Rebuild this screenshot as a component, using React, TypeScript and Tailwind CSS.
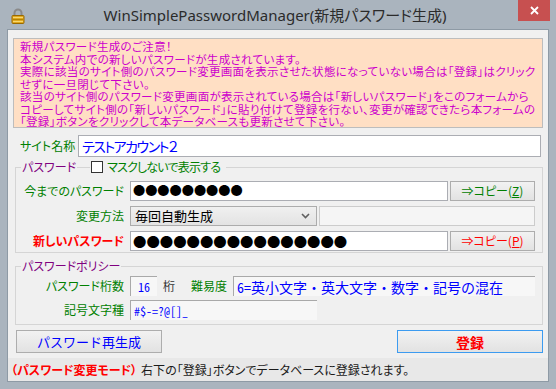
import React from "react";

const Lock = () => (
  <svg width="14" height="16" viewBox="0 0 14 16">
    <path d="M3.5 8 V5 a3.5 3.5 0 0 1 7 0 V8" fill="none" stroke="#8a8a8a" strokeWidth="2" />
    <rect x="1" y="7.5" width="12" height="8" rx="1" fill="#e0a820" stroke="#9a6a00" strokeWidth="1" />
    <line x1="2" y1="9.5" x2="12" y2="9.5" stroke="#f6d870" />
    <line x1="2" y1="11.5" x2="12" y2="11.5" stroke="#b58300" />
    <line x1="2" y1="13.5" x2="12" y2="13.5" stroke="#f6d870" />
  </svg>
);

const Chevron = () => (
  <svg width="9" height="6" viewBox="0 0 9 6">
    <path d="M1 1 L4.5 4.5 L8 1" fill="none" stroke="#606060" strokeWidth="1.6" />
  </svg>
);

export default function App() {
  return (
    <div className="w-[556px] h-[389px] bg-[#aab4be] flex flex-col font-['Noto_Sans_CJK_JP',sans-serif] [font-feature-settings:'palt'] text-[12px] leading-[14px] overflow-hidden">
      {/* Title bar */}
      <div className="h-[29px] flex items-start shrink-0">
        <div className="w-[32px] pl-[11px] pt-[8px]">
          <Lock />
        </div>
        <div className="flex-1 text-center pt-[5px] text-[15px] leading-[20px] text-[#2b2b2b] font-['Noto_Sans','Noto_Sans_CJK_JP',sans-serif] whitespace-nowrap">
          WinSimplePasswordManager(新規パスワード生成)
        </div>
        <div className="w-[38px] pr-[6px]">
          <div className="w-[32px] h-[21px] bg-[#c75050] flex items-center justify-center">
            <svg width="9" height="9" viewBox="0 0 9 9">
              <path d="M1 1 L8 8 M8 1 L1 8" stroke="#ffffff" strokeWidth="1.8" />
            </svg>
          </div>
        </div>
      </div>

      {/* Client */}
      <div className="mx-[7px] border border-[#8e9aa5] bg-[#f0f0f0] h-[353px] flex flex-col shrink-0">
        {/* Notice */}
        <div className="mt-[8px] ml-[5px] w-[530px] h-[90px] border border-[#bdbdbd] bg-[#ffdfc4] px-[6px] pt-[1px] text-[#cc00cc] text-[11.5px] tracking-[0.3px] leading-[12.5px] whitespace-nowrap">
          <div>新規パスワード生成のご注意！</div>
          <div>本システム内での新しいパスワードが生成されています。</div>
          <div>実際に該当のサイト側のパスワード変更画面を表示させた状態になっていない場合は「登録」はクリック</div>
          <div>せずに一旦閉じて下さい。</div>
          <div>該当のサイト側のパスワード変更画面が表示されている場合は「新しいパスワード」をこのフォームから</div>
          <div>コピーしてサイト側の「新しいパスワード」に貼り付けて登録を行ない、変更が確認できたら本フォームの</div>
          <div>「登録」ボタンをクリックして本データベースも更新させて下さい。</div>
        </div>

        {/* Site name */}
        <div className="mt-[7px] pl-[12px] h-[22px] flex items-center">
          <div className="w-[58px] text-[#008000]">サイト名称</div>
          <div className="w-[463px] h-[22px] border border-[#abadb3] bg-white flex items-center pl-[3px] text-[14px] text-[#0000ff] tracking-[-1.5px]">
            テストアカウント２
          </div>
        </div>

        {/* Password group */}
        <fieldset className="mt-[3px] ml-[7px] w-[528px] border border-[#d5d5d5] pt-[7px] pb-[1px]">
          <legend className="ml-[5px] flex items-center h-[14px]">
            <span className="px-[1px] text-[#800080]">パスワード</span>
            <span className="w-[13px] h-px bg-[#d5d5d5]" />
            <span className="ml-[1px] w-[12px] h-[12px] border border-[#333333] bg-white" />
            <span className="ml-[4px] pr-[6px] text-[#008000] tracking-[-0.8px]">マスクしないで表示する</span>
          </legend>
          <div className="flex flex-col gap-[5px]">
            <div className="flex items-center h-[20px]">
              <div className="w-[109px] pr-[1px] text-right text-[#008000] whitespace-nowrap">今までのパスワード</div>
              <div className="ml-[5px] w-[318px] h-[20px] border border-[#abadb3] bg-white flex items-center pl-[2px] text-[12.2px] leading-[14px] text-black overflow-hidden whitespace-nowrap [font-feature-settings:normal]">
                ●●●●●●●●●
              </div>
              <div className="ml-[2px] w-[85px] h-[20px] border border-[#adadad] bg-gradient-to-b from-[#f2f2f2] to-[#e2e2e2] flex items-center justify-center text-[#008000]">
                ⇒コピー(<span className="underline">Z</span>)
              </div>
            </div>
            <div className="flex items-center h-[20px]">
              <div className="w-[109px] pr-[1px] text-right text-[#008000]">変更方法</div>
              <div className="ml-[5px] w-[187px] h-[20px] border border-[#acacac] bg-gradient-to-b from-[#f0f0f0] to-[#e3e3e3] flex items-center justify-between pl-[4px] pr-[6px] text-black">
                <span className="text-[13px]">毎回自動生成</span>
                <Chevron />
              </div>
              <div className="ml-[2px] w-[216px] h-[20px] border border-[#cccccc] bg-[#f5f5f5]" />
            </div>
            <div className="flex items-center h-[20px]">
              <div className="w-[109px] pr-[1px] text-right text-[#ff0000] font-bold whitespace-nowrap">新しいパスワード</div>
              <div className="ml-[5px] w-[318px] h-[20px] border border-[#abadb3] bg-white flex items-center pl-[2px] text-[13.4px] leading-[14px] text-black overflow-hidden whitespace-nowrap [font-feature-settings:normal]">
                ●●●●●●●●●●●●●●●●
              </div>
              <div className="ml-[2px] w-[85px] h-[20px] border border-[#adadad] bg-gradient-to-b from-[#f2f2f2] to-[#e2e2e2] flex items-center justify-center text-[#ff0000]">
                ⇒コピー(<span className="underline">P</span>)
              </div>
            </div>
          </div>
        </fieldset>

        {/* Policy group */}
        <fieldset className="mt-[6px] ml-[7px] w-[528px] border border-[#d5d5d5] pt-[3px] pb-[4px]">
          <legend className="ml-[5px] h-[14px] px-[1px] text-[#800080]">パスワードポリシー</legend>
          <div className="flex flex-col gap-[4px]">
            <div className="flex items-center h-[20px]">
              <div className="w-[109px] pr-[1px] text-right text-[#008000]">パスワード桁数</div>
              <div className="ml-[5px] w-[27px] h-[20px] border-t border-l border-[#a9a9a9] bg-[#f7f7f7] flex items-center justify-center text-[12px] text-[#0000ff] font-['Noto_Sans_Mono_CJK_JP','Liberation_Mono',monospace]">
                16
              </div>
              <div className="ml-[6px] text-[#333333]">桁</div>
              <div className="ml-[16px] text-[#008000]">難易度</div>
              <div className="ml-[6px] w-[302px] h-[20px] border-t border-l border-[#a9a9a9] bg-[#f7f7f7] flex items-center pl-[3px] text-[14px] text-[#0000ff] whitespace-nowrap overflow-hidden font-['Noto_Sans_Mono_CJK_JP','Noto_Sans_CJK_JP',monospace] [font-feature-settings:normal]">
                6=英小文字・英大文字・数字・記号の混在
              </div>
            </div>
            <div className="flex items-center h-[20px]">
              <div className="w-[109px] pr-[1px] text-right text-[#008000]">記号文字種</div>
              <div className="ml-[5px] w-[187px] h-[20px] border-t border-l border-[#a9a9a9] bg-[#f7f7f7] flex items-center pl-[3px] text-[12px] text-[#0000ff] font-['Noto_Sans_Mono_CJK_JP','Liberation_Mono',monospace]">
                #$-=?@[]_
              </div>
            </div>
          </div>
        </fieldset>

        {/* Buttons */}
        <div className="mt-[5px] pl-[8px] pr-[5px] flex justify-between">
          <div className="w-[146px] h-[23px] border border-[#adadad] bg-gradient-to-b from-[#f2f2f2] to-[#e2e2e2] flex items-center justify-center text-[13px] text-[#0000ff] [font-feature-settings:normal]">
            パスワード再生成
          </div>
          <div className="w-[146px] h-[23px] border border-[#3c9bf0] bg-gradient-to-b from-[#f2f2f2] to-[#e2e2e2] flex items-center justify-center text-[14px] font-bold text-[#ff0000]">
            登録
          </div>
        </div>

        {/* Status bar */}
        <div className="mt-[5px] h-[23px] bg-[#e8e8e8] flex items-center pl-[3px] whitespace-nowrap">
          <span className="font-bold text-[#ff0000]">（パスワード変更モード）</span>
          <span className="ml-[4px] text-[#1a1a1a]">右下の「登録」ボタンでデータベースに登録されます。</span>
        </div>
      </div>
    </div>
  );
}
